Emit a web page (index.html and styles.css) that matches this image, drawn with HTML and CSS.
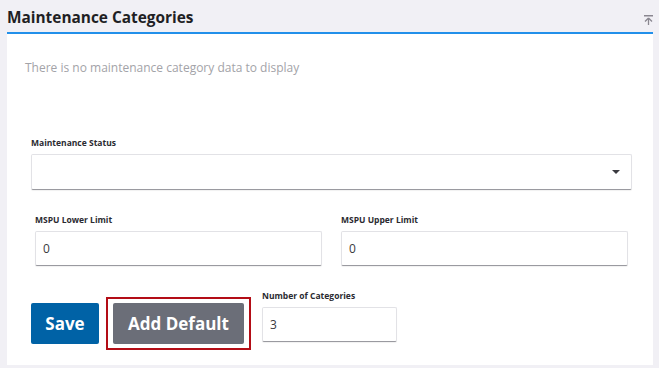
FILE: index.html
```html
<!DOCTYPE html>
<html>
<head>
  <title>Maintenance Categories</title>
  <link rel="stylesheet" href="styles.css">
</head>
<body>
  <div class="page">
    <div class="header">
      <h1>Maintenance Categories</h1>
      <button class="collapse" title="Collapse">
        <svg width="9" height="10" viewBox="0 0 9 10">
          <path d="M0 0.75H9" stroke="#8a8790" stroke-width="1.5"/>
          <path d="M4.5 3L1 6.5M4.5 3L8 6.5M4.5 3V10" stroke="#8a8790" stroke-width="1.3" fill="none"/>
        </svg>
      </button>
    </div>

    <div class="panel">
      <p class="empty">There is no maintenance category data to display</p>

      <div class="form">
        <div class="field">
          <label class="label">Maintenance Status</label>
          <div class="select"><span class="caret"></span></div>
        </div>

        <div class="limits">
          <div class="field">
            <label class="label">MSPU Lower Limit</label>
            <div class="input">0</div>
          </div>
          <div class="field">
            <label class="label">MSPU Upper Limit</label>
            <div class="input">0</div>
          </div>
        </div>

        <div class="actions">
          <button class="btn btn-save">Save</button>
          <div class="highlight">
            <button class="btn btn-default">Add Default</button>
          </div>
          <div class="field count">
            <label class="label">Number of Categories</label>
            <div class="input">3</div>
          </div>
        </div>
      </div>
    </div>
  </div>
</body>
</html>
```

FILE: styles.css
```css
body {
  margin: 0;
  background-color: #f1f0f5;
  font-family: "Open Sans", "Liberation Sans", sans-serif;
  color: #222;
}

.page {
  padding: 0 6px 0 7px;
}

.header {
  display: flex;
  justify-content: space-between;
  align-items: flex-start;
  height: 34px;
  padding-top: 8px;
  box-sizing: border-box;
  border-bottom: 2px solid #2290ea;
}

.header h1 {
  margin: 0;
  font-size: 15.4px;
  line-height: 20px;
  font-weight: 700;
  color: #1f1f24;
}

.collapse {
  border: none;
  background: none;
  padding: 0;
  margin-top: 7px;
  width: 9px;
  height: 10px;
  display: flex;
}

.panel {
  background-color: #fff;
  height: 331px;
  padding-top: 26px;
  box-sizing: border-box;
}

.empty {
  margin: 0 0 0 18px;
  font-size: 12px;
  line-height: 16px;
  color: #a3a3a8;
}

.form {
  margin: 61px 21px 0 24px;
}

.field {
  display: flex;
  flex-direction: column;
}

.label {
  font-size: 8.5px;
  line-height: 12px;
  font-weight: 700;
  color: #2a2a30;
  margin-bottom: 5px;
}

.select,
.input {
  box-sizing: border-box;
  border: 1px solid #e2e2e6;
  border-bottom: 1px solid #9a9aa0;
  border-radius: 2px;
  background: #fff;
  box-shadow: 0 1px 1px rgba(0, 0, 0, 0.06);
}

.select {
  height: 36px;
  display: flex;
  align-items: center;
  justify-content: flex-end;
  padding-right: 11px;
}

.caret {
  width: 0;
  height: 0;
  border-left: 4px solid transparent;
  border-right: 4px solid transparent;
  border-top: 4px solid #3a3a40;
}

.input {
  height: 35px;
  padding-left: 7px;
  display: flex;
  align-items: center;
  font-size: 12px;
  color: #3a3a40;
}

.limits {
  display: grid;
  grid-template-columns: 1fr 1fr;
  column-gap: 19px;
  padding: 0 4px;
  margin-top: 24px;
}

.actions {
  display: flex;
  align-items: flex-start;
  margin-top: 24px;
}

.btn {
  height: 41px;
  border: none;
  border-radius: 2px;
  color: #fff;
  font-family: inherit;
  font-size: 17px;
  font-weight: 700;
  cursor: pointer;
}

.btn-save {
  width: 68px;
  margin-top: 13px;
  background-color: #0062a6;
}

.highlight {
  margin: 7px 0 0 7px;
  padding: 4px 5px;
  border: 2px solid #b30d16;
  display: flex;
}

.btn-default {
  width: 131px;
  background-color: #6b6e78;
}

.count {
  margin-left: 11px;
  width: 135px;
}
```
